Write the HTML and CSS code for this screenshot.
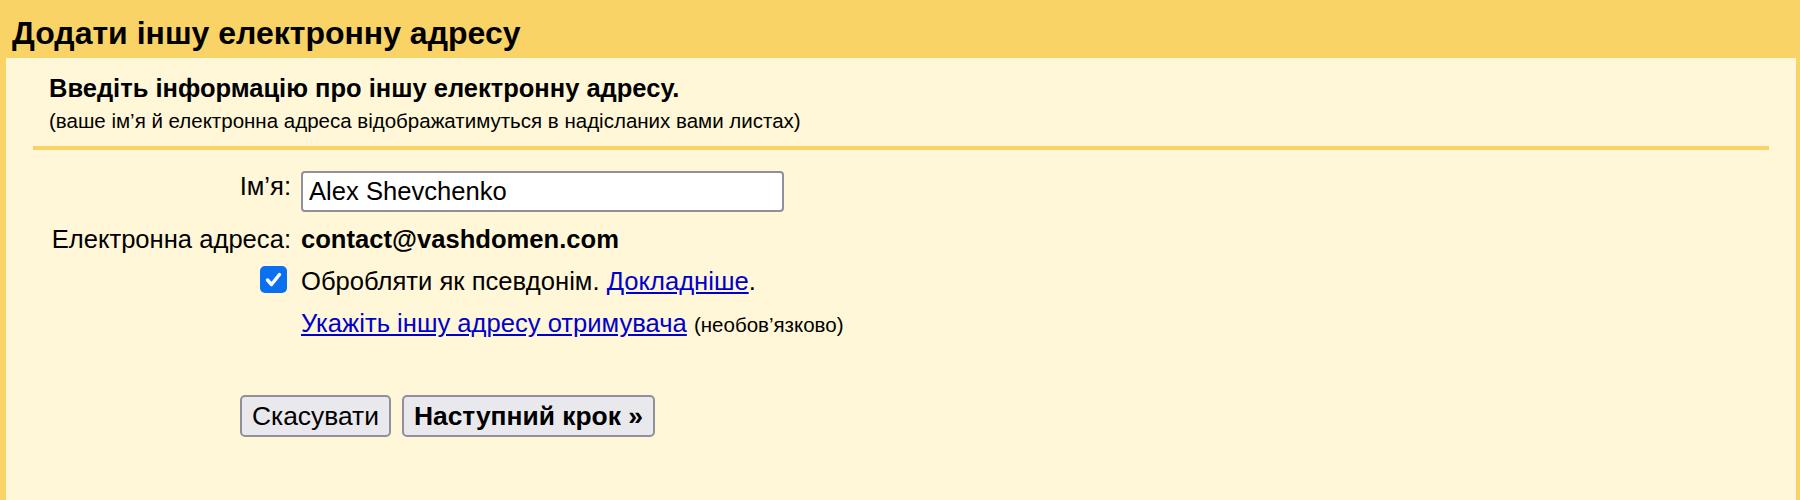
FILE: index.html
```html
<!DOCTYPE html>
<html lang="uk">
<head>
<meta charset="utf-8">
<title>Додати іншу електронну адресу</title>
<link rel="stylesheet" href="styles.css">
</head>
<body>
<div class="page">
  <header class="titlebar">
    <h1 class="title">Додати іншу електронну адресу</h1>
  </header>
  <main class="panel">
    <div class="intro">
      <div class="lead">Введіть інформацію про іншу електронну адресу.</div>
      <div class="note">(ваше ім’я й електронна адреса відображатимуться в надісланих вами листах)</div>
    </div>
    <div class="divider"></div>
    <div class="form">
      <label class="lbl" for="name">Ім’я:</label>
      <div class="val"><input id="name" class="field" type="text" value="Alex Shevchenko"></div>

      <div class="lbl">Електронна адреса:</div>
      <div class="val strong">contact@vashdomen.com</div>

      <div class="lbl">
        <span class="check">
          <svg viewBox="0 0 27 27" width="27" height="27"><polyline points="7.5,14 11.5,18.5 19.5,8.5" fill="none" stroke="#fff" stroke-width="3.4" stroke-linecap="round" stroke-linejoin="round"/></svg>
        </span>
      </div>
      <div class="val">Обробляти як псевдонім. <a class="link" href="#">Докладніше</a>.</div>

      <div class="lbl"></div>
      <div class="val"><a class="link" href="#">Укажіть іншу адресу отримувача</a> <span class="small">(необов’язково)</span></div>
    </div>
    <div class="actions">
      <button class="btn" type="button">Скасувати</button>
      <button class="btn btn-primary" type="button">Наступний крок »</button>
    </div>
  </main>
</div>
</body>
</html>
```

FILE: styles.css
```css
html, body {
  margin: 0;
  padding: 0;
}

body {
  background: #f9d366;
  font-family: "Liberation Sans", Arial, sans-serif;
  color: #000;
}

.page {
  display: flex;
  flex-direction: column;
  height: 500px;
}

.titlebar {
  height: 58px;
  flex: none;
}

.title {
  margin: 0;
  padding: 8px 0 0 12px;
  font-size: 32px;
  line-height: 50px;
  font-weight: bold;
}

.panel {
  flex: 1;
  margin: 0 4px 0 6px;
  background: #fff7d7;
  padding: 0 27px;
}

.intro {
  padding: 15px 0 13px 16px;
}

.lead {
  font-size: 25.5px;
  line-height: 30px;
  font-weight: bold;
}

.note {
  margin-top: 6px;
  font-size: 20.5px;
  line-height: 24px;
}

.divider {
  height: 4px;
  background: #f9d366;
}

.form {
  margin-top: 21px;
  display: grid;
  grid-template-columns: 258px 1fr;
  column-gap: 10px;
  row-gap: 12px;
  font-size: 25.6px;
  line-height: 30px;
}

.lbl {
  text-align: right;
  display: flex;
  justify-content: flex-end;
  align-items: flex-start;
}

.val {
  min-height: 30px;
}

.strong {
  font-weight: bold;
}

.field {
  display: block;
  box-sizing: border-box;
  width: 483px;
  height: 41px;
  margin: 0;
  padding: 0 6px;
  border: 2px solid #8f8f9d;
  border-radius: 4px;
  background: #fff;
  font-family: inherit;
  font-size: 25.6px;
  color: #000;
}

.check {
  display: block;
  width: 27px;
  height: 27px;
  margin-right: 4px;
  border-radius: 5px;
  background: #0b70f0;
}

.check svg {
  display: block;
}

.link {
  color: #0000cc;
  text-decoration: underline;
}

.small {
  font-size: 20.5px;
}

.actions {
  margin-top: 55px;
  padding-left: 207px;
  display: flex;
  gap: 11px;
}

.btn {
  box-sizing: border-box;
  height: 42px;
  padding: 0 10px;
  border: 2px solid #8f8f9d;
  border-radius: 5px;
  background: #e9e9ed;
  font-family: inherit;
  font-size: 26.4px;
  color: #000;
}

.btn-primary {
  font-weight: bold;
}
```
